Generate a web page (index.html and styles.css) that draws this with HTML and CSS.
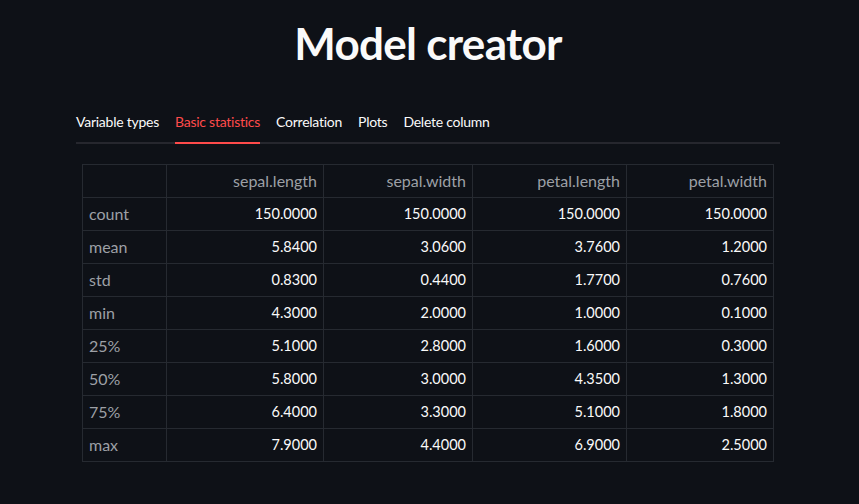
FILE: index.html
```html
<!DOCTYPE html>
<html>
<head>
<meta charset="utf-8">
<link rel="stylesheet" href="styles.css">
</head>
<body>
<main class="main">
  <h1 class="title">Model creator</h1>
  <div class="tabs">
    <div class="tab">Variable types</div>
    <div class="tab active">Basic statistics</div>
    <div class="tab">Correlation</div>
    <div class="tab">Plots</div>
    <div class="tab">Delete column</div>
  </div>
  <table class="stats">
    <colgroup>
      <col class="c0"><col class="c1"><col class="c2"><col class="c3"><col class="c4">
    </colgroup>
    <thead>
      <tr><th></th><th>sepal.length</th><th>sepal.width</th><th>petal.length</th><th>petal.width</th></tr>
    </thead>
    <tbody>
      <tr><th>count</th><td>150.0000</td><td>150.0000</td><td>150.0000</td><td>150.0000</td></tr>
      <tr><th>mean</th><td>5.8400</td><td>3.0600</td><td>3.7600</td><td>1.2000</td></tr>
      <tr><th>std</th><td>0.8300</td><td>0.4400</td><td>1.7700</td><td>0.7600</td></tr>
      <tr><th>min</th><td>4.3000</td><td>2.0000</td><td>1.0000</td><td>0.1000</td></tr>
      <tr><th>25%</th><td>5.1000</td><td>2.8000</td><td>1.6000</td><td>0.3000</td></tr>
      <tr><th>50%</th><td>5.8000</td><td>3.0000</td><td>4.3500</td><td>1.3000</td></tr>
      <tr><th>75%</th><td>6.4000</td><td>3.3000</td><td>5.1000</td><td>1.8000</td></tr>
      <tr><th>max</th><td>7.9000</td><td>4.4000</td><td>6.9000</td><td>2.5000</td></tr>
    </tbody>
  </table>
</main>
</body>
</html>
```
FILE: styles.css
```css
html, body {
  margin: 0;
  padding: 0;
  background: #0e1117;
  color: #fafafa;
  font-family: Lato, "Noto Sans", sans-serif;
}
.main {
  width: 704px;
  margin: 0 0 0 76px;
  padding-top: 17px;
}
.title {
  margin: 0;
  text-align: center;
  font-size: 44px;
  font-weight: 700;
  line-height: 53px;
  letter-spacing: -0.7px;
}
.tabs {
  display: flex;
  gap: 16px;
  margin-top: 42px;
  border-bottom: 2px solid #26272e;
}
.tab {
  font-size: 14px;
  line-height: 20px;
  padding-bottom: 10px;
  margin-bottom: -2px;
  border-bottom: 2px solid transparent;
  color: #fafafa;
  letter-spacing: -0.25px;
}
.tab.active {
  color: #ff4b4b;
  border-bottom-color: #ff4b4b;
}
.stats {
  margin-top: 20px;
  margin-left: 6px;
  width: 691px;
  border-collapse: collapse;
  table-layout: fixed;
  font-size: 16px;
}
.c0 { width: 84px; }
.c1 { width: 157px; }
.c2 { width: 149px; }
.c3 { width: 154px; }
.c4 { width: 147px; }
.stats th, .stats td {
  border: 1px solid #262a31;
  height: 33px;
  padding: 0 6px;
  box-sizing: border-box;
  line-height: 20px;
  font-weight: 400;
}
.stats thead th {
  text-align: right;
  color: #9da0a6;
}
.stats tbody th {
  text-align: left;
  color: #9da0a6;
}
.stats td {
  text-align: right;
  color: #fafafa;
  font-size: 14.5px;
}
```
